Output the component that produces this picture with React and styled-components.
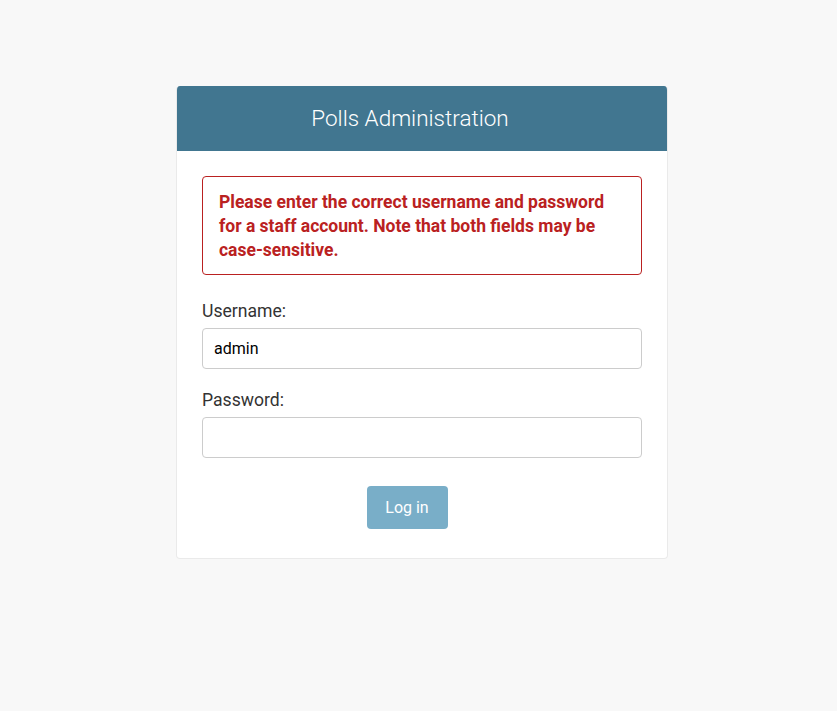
import styled, { createGlobalStyle } from "styled-components"

const GlobalStyle = createGlobalStyle`
    html, body {
        margin: 0;
        padding: 0;
        background: #f8f8f8;
        font-family: Roboto, "Liberation Sans", sans-serif;
        color: #333;
    }
`

export default function App() {
    return (
        <Page>
            <GlobalStyle />
            <Card>
                <Header>
                    <h1>Polls Administration</h1>
                </Header>

                <Content>
                    <ErrorNote>
                        Please enter the correct username and password for a staff
                        account. Note that both fields may be case-sensitive.
                    </ErrorNote>

                    <Field>
                        <label htmlFor="id_username">Username:</label>
                        <Input id="id_username" type="text" defaultValue="admin" />
                    </Field>

                    <Field>
                        <label htmlFor="id_password">Password:</label>
                        <Input id="id_password" type="password" />
                    </Field>

                    <SubmitRow>
                        <Button type="submit">Log in</Button>
                    </SubmitRow>
                </Content>
            </Card>
        </Page>
    )
}

const Page = styled.div`
    min-height: 711px;
    display: flex;
    justify-content: center;
    align-items: flex-start;
    padding-top: 86px;
    box-sizing: border-box;
`

const Card = styled.div`
    width: 492px;
    margin-left: 7px;
    background: #fff;
    border: 1px solid #eaeaea;
    border-top: none;
    border-radius: 4px;
    box-sizing: border-box;
    overflow: hidden;
`

const Header = styled.div`
    height: 65px;
    margin: 0 -1px;
    background: #417690;
    display: flex;
    align-items: center;
    justify-content: center;
    padding-right: 24px;
    padding-bottom: 2px;
    box-sizing: border-box;

    h1 {
        margin: 0;
        font-weight: 300;
        font-size: 22.5px;
        color: #fff;
    }
`

const Content = styled.div`
    padding: 25px 25px 29px;
`

const ErrorNote = styled.p`
    margin: 0 0 25px;
    padding: 13px 16px 12px;
    border: 1px solid #ba2121;
    border-radius: 4px;
    color: #ba2121;
    font-size: 17.5px;
    font-weight: 700;
    line-height: 24px;
`

const Field = styled.div`
    display: flex;
    flex-direction: column;
    gap: 6px;
    margin-bottom: 20px;

    label {
        font-size: 17.6px;
        line-height: 22px;
        color: #333;
    }
`

const Input = styled.input`
    height: 41px;
    box-sizing: border-box;
    border: 1px solid #ccc;
    border-radius: 4px;
    padding: 0 11px;
    font-family: Roboto, "Liberation Sans", sans-serif;
    font-size: 16px;
    color: #000;
    background: #fff;
    outline: none;
`

const SubmitRow = styled.div`
    display: flex;
    justify-content: center;
    padding-top: 8px;
    padding-right: 30px;
`

const Button = styled.button`
    width: 81px;
    height: 43px;
    border: none;
    border-radius: 4px;
    background: #79aec8;
    color: #fff;
    font-family: Roboto, "Liberation Sans", sans-serif;
    font-size: 16px;
    cursor: pointer;
`
